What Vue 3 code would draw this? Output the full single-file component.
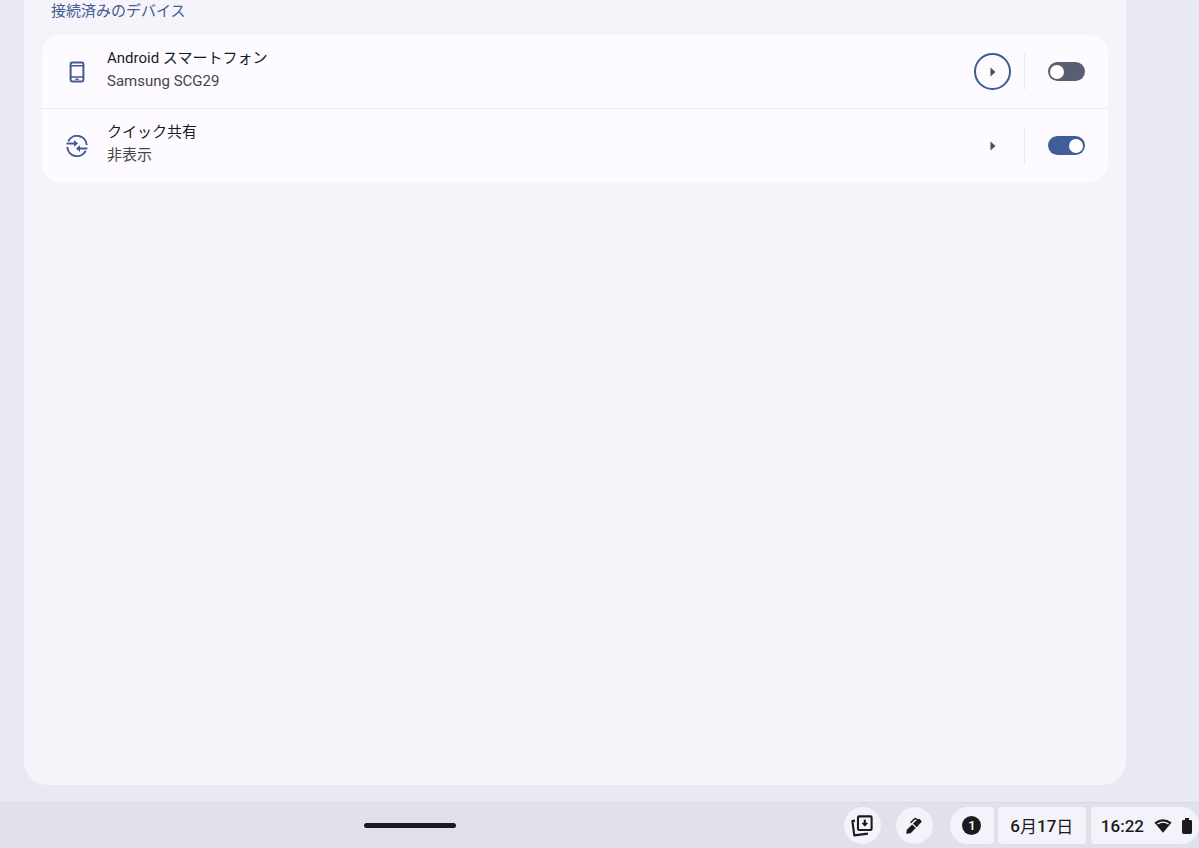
<template>
  <div class="desktop">
    <main class="settings">
      <section class="panel">
        <h2 class="section-title">接続済みのデバイス</h2>
        <ul class="card">
          <li v-for="device in devices" :key="device.id" class="row">
            <svg v-if="device.id === 'phone'" class="row-icon" viewBox="0 0 22 22">
              <rect x="4.6" y="1.6" width="12.8" height="18.8" rx="1.4" />
              <path d="M4.6 4.8h12.8M4.6 16h12.8" class="thin" />
              <path d="M9.2 18.2h3.6" class="thin" />
            </svg>
            <svg v-else class="row-icon" viewBox="0 0 22 22">
              <path d="M2.3 6.3A9.7 9.7 0 0 1 20.7 10" />
              <path d="M19.7 15.7A9.7 9.7 0 0 1 1.3 12" />
              <path d="M.6 8.4h9M21.4 13.6h-9" />
              <path d="M8 5l4 3.4-4 3.4zM14 10.2l-4 3.4 4 3.4z" class="head" />
            </svg>
            <div class="row-text">
              <label :for="device.id" class="row-name">{{ device.name }}</label>
              <span class="row-status">{{ device.status }}</span>
            </div>
            <button
              type="button"
              class="arrow-btn"
              :class="{ focused: focusedId === device.id }"
              :aria-label="device.name"
              @click="focusedId = device.id"
            >
              <svg viewBox="0 0 6 10"><path d="M0.5 0.5L5.5 5L0.5 9.5z" /></svg>
            </button>
            <span class="separator"></span>
            <input :id="device.id" v-model="device.enabled" type="checkbox" role="switch" class="toggle">
          </li>
        </ul>
      </section>
    </main>

    <footer class="shelf">
      <div class="handle-area">
        <span class="handle"></span>
      </div>
      <div class="tray">
        <button type="button" class="round-btn" aria-label="保管スペース">
          <svg class="tray-icon" viewBox="0 0 24 24">
            <rect x="8" y="2.4" width="13.6" height="13.6" rx="1.2" />
            <path d="M5 6.6l-2.6 .4L4.3 21.4l13.6-1.8" />
            <path d="M14.8 5.6v5" />
            <path d="M12.2 9.2h5.2l-2.6 3z" class="head" />
          </svg>
        </button>
        <button type="button" class="round-btn stylus-btn" aria-label="タッチペンツール">
          <svg class="stylus-icon" viewBox="0 0 18 18">
            <path d="M1.2 16.8l.8-4.2 5.2-5.2 3.6 3.6-5.2 5.2z" />
            <path d="M8 6.6l2.4-2.4 3.6 3.6-2.4 2.4z" />
            <path d="M10.4 4.8l2.5-2.6q1-.9 2 0l1.2 1.2q.9 1 0 2L13.4 8z" />
            <path d="M5.6 5.8L9.4 2q.9-.8 1.8 0l1.2 1.1" class="clip" />
          </svg>
        </button>
        <button type="button" class="pill notice-btn" aria-label="通知">
          <span class="notice-count">1</span>
        </button>
        <button type="button" class="pill date-btn">6<span class="kanji">月</span>17<span class="kanji">日</span></button>
        <button type="button" class="pill status-btn">
          <span>16:22</span>
          <svg class="wifi-icon" viewBox="0 0 18 14">
            <path d="M9 13.7L.4 3.5Q9-2.8 17.6 3.5z" />
            <path d="M3.4 5Q9 1.2 14.6 5" class="gap" />
          </svg>
          <svg class="battery-icon" viewBox="0 0 10 16">
            <path d="M3 0h4v2h1.6q1.4 0 1.4 1.4v11.2q0 1.4-1.4 1.4H1.4Q0 16 0 14.6V3.4Q0 2 1.4 2H3z" />
          </svg>
        </button>
      </div>
    </footer>
  </div>
</template>

<script setup>
import { ref } from 'vue'

const focusedId = ref('phone')

const devices = ref([
  { id: 'phone', name: 'Android スマートフォン', status: 'Samsung SCG29', enabled: false },
  { id: 'share', name: 'クイック共有', status: '非表示', enabled: true }
])
</script>

<style>
body {
  margin: 0;
  background: #e9e9f3;
}
</style>

<style scoped>
.desktop {
  display: flex;
  flex-direction: column;
  height: 100vh;
  overflow: hidden;
  background: #e9e9f3;
  color: #1b1b1f;
  font-family: Roboto, "Noto Sans CJK JP", sans-serif;
}

.settings {
  flex: 1;
  display: flex;
  min-height: 0;
  padding: 0 73px 17px 24px;
}

/* the top of the panel is scrolled out of view */
.panel {
  flex: 1;
  box-sizing: border-box;
  margin-top: -20px;
  padding: 20px 18px;
  border-radius: 24px;
  background: #f5f4fb;
}

.section-title {
  margin: 0 0 12px;
  padding-left: 9px;
  font-size: 15px;
  line-height: 23px;
  font-weight: 400;
  color: #465d91;
}

.card {
  margin: 0;
  padding: 0;
  list-style: none;
  border-radius: 18px;
  background: #fdfbff;
}

.row {
  display: flex;
  align-items: center;
  height: 73px;
  padding: 0 23px 0 24px;

  & + & {
    border-top: 1px solid #ecebf1;
  }
}

.row-icon {
  width: 22px;
  height: 22px;
  margin-right: 19px;
  fill: none;
  stroke: #435b93;
  stroke-width: 2;

  .thin {
    stroke-width: 1.4;
  }

  .head {
    fill: #435b93;
    stroke: none;
  }
}

.row-text {
  flex: 1;
  display: flex;
  flex-direction: column;
  align-items: flex-start;
  padding-bottom: 4px;
  font-size: 15px;
  line-height: 23px;
}

.row-status {
  color: #46464c;
}

.arrow-btn {
  display: flex;
  align-items: center;
  justify-content: center;
  box-sizing: border-box;
  width: 37px;
  height: 37px;
  padding: 0;
  border: 2px solid transparent;
  border-radius: 50%;
  background: none;
  cursor: pointer;

  &.focused {
    border-color: #415a8f;
  }

  svg {
    width: 6px;
    height: 10px;
    fill: #4c4d55;
  }
}

.separator {
  width: 1px;
  height: 37px;
  margin: 0 23px 0 13px;
  background: #ecebf1;
}

.toggle {
  appearance: none;
  display: flex;
  align-items: center;
  box-sizing: border-box;
  width: 37px;
  height: 19px;
  margin: 0;
  padding: 0 2px;
  border-radius: 10px;
  background: #5a5e72;
  cursor: pointer;

  &::before {
    content: "";
    width: 14px;
    height: 14px;
    border-radius: 50%;
    background: #fff;
  }

  &:checked {
    justify-content: flex-end;
    background: #415e98;
  }
}

.shelf {
  display: flex;
  align-items: center;
  box-sizing: border-box;
  height: 46px;
  border-top: 1px solid #d9d9e2;
  background: #e1e1eb;
}

.handle-area {
  flex: 1;
  display: flex;
  justify-content: center;
}

.handle {
  width: 92px;
  height: 5px;
  border-radius: 3px;
  background: #1a1924;
}

.tray {
  display: flex;
  align-items: center;
  margin-left: 24px;
}

.round-btn,
.pill {
  display: flex;
  align-items: center;
  justify-content: center;
  box-sizing: border-box;
  height: 37px;
  padding: 0;
  border: 0;
  background: #f3f3fa;
  color: #1b1b1f;
  font-family: inherit;
  font-size: 17px;
  font-weight: 500;
  cursor: pointer;
}

.round-btn {
  width: 37px;
  margin-right: 15px;
  border-radius: 50%;
}

.stylus-btn {
  margin-right: 17px;
}

.tray-icon {
  width: 24px;
  height: 24px;
  fill: none;
  stroke: #1b1b1f;
  stroke-width: 2.1;
  stroke-linejoin: round;

  .head {
    fill: #1b1b1f;
    stroke-width: 1;
  }
}

.stylus-icon {
  width: 18px;
  height: 18px;
  fill: #1b1b1f;

  .clip {
    fill: none;
    stroke: #1b1b1f;
    stroke-width: 1.5;
  }
}

.pill {
  border-radius: 4px;
}

.notice-btn {
  width: 44px;
  margin-right: 4px;
  border-radius: 18px 4px 4px 18px;
}

.notice-count {
  width: 19px;
  height: 19px;
  border-radius: 50%;
  background: #1b1b1f;
  color: #fff;
  font-size: 13px;
  line-height: 19px;
}

.date-btn {
  width: 88px;
  margin-right: 5px;
}

.kanji {
  font-weight: 400;
}

.status-btn {
  padding: 0 7px 0 10px;
  border-radius: 4px 18px 18px 4px;
}

.wifi-icon {
  width: 18px;
  height: 14px;
  margin: 0 10px;
  fill: #1b1b1f;

  .gap {
    fill: none;
    stroke: #f3f3fa;
    stroke-width: 1.3;
  }
}

.battery-icon {
  width: 10px;
  height: 16px;
  fill: #1b1b1f;
}
</style>
